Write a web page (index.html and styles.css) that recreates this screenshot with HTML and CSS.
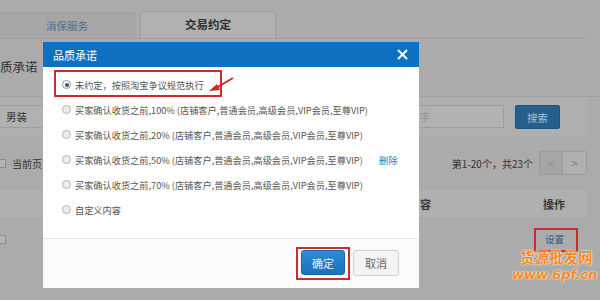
FILE: index.html
```html
<!DOCTYPE html>
<html lang="zh-CN">
<head>
<meta charset="utf-8">
<title>品质承诺</title>
<link rel="stylesheet" href="styles.css">
</head>
<body>
<div class="page">
  <div class="tabs">
    <div class="tab tab-off">消保服务</div>
    <div class="tab tab-on">交易约定</div>
  </div>
  <div class="heading">质承诺</div>
  <div class="filter">
    <div class="cat">男装</div>
    <div class="spacer"></div>
    <div class="kw">字</div>
    <div class="search">搜索</div>
  </div>
  <div class="pagerrow">
    <div class="selall"><span class="cb"></span><span>当前页</span></div>
    <div class="spacer"></div>
    <div class="count">第1-20个，共23个</div>
    <div class="pager"><span class="pbtn prev">&lt;</span><span class="pbtn">&gt;</span></div>
  </div>
  <div class="thead">
    <div class="spacer"></div>
    <div class="th-content">容</div>
    <div class="th-op">操作</div>
  </div>
  <div class="trow">
    <span class="cb"></span>
    <div class="spacer"></div>
    <a class="setlink">设置</a>
  </div>
</div>

<div class="mark mark-set"></div>
<div class="watermark">
  <div class="wm1">货源批发网</div>
  <div class="wm2">www.6pf.cn</div>
</div>

<div class="dialog">
  <div class="dhead">
    <span class="dtitle">品质承诺</span>
    <svg class="close" width="11" height="11" viewBox="0 0 11 11"><path d="M1 1L10 10M10 1L1 10" stroke="#fff" stroke-width="2"/></svg>
  </div>
  <div class="dbody">
    <label class="opt"><span class="radio on"></span>未约定，按照淘宝争议规范执行</label>
    <label class="opt"><span class="radio"></span>买家确认收货之前,100% (店铺客户,普通会员,高级会员,VIP会员,至尊VIP)</label>
    <label class="opt"><span class="radio"></span>买家确认收货之前,20% (店铺客户,普通会员,高级会员,VIP会员,至尊VIP)</label>
    <label class="opt"><span class="radio"></span>买家确认收货之前,50% (店铺客户,普通会员,高级会员,VIP会员,至尊VIP)<a class="del">删除</a></label>
    <label class="opt"><span class="radio"></span>买家确认收货之前,70% (店铺客户,普通会员,高级会员,VIP会员,至尊VIP)</label>
    <label class="opt"><span class="radio"></span>自定义内容</label>
  </div>
  <div class="dfoot">
    <button class="btn ok">确定</button>
    <button class="btn cancel">取消</button>
  </div>
  <div class="mark mark-opt"></div>
  <div class="mark mark-btn"></div>
  <svg class="arrow" width="30" height="20" viewBox="0 0 30 20"><path d="M27 2L10 12" stroke="#d4262b" stroke-width="2"/><path d="M3 15L11 8L14 14Z" fill="#d4262b"/></svg>
</div>
</body>
</html>
```

FILE: styles.css
```css
* { box-sizing: border-box; margin: 0; padding: 0; }
html, body { width: 600px; height: 300px; overflow: hidden; }
body {
  background: #ababab;
  font-family: "Noto Sans CJK SC", "Noto Sans", sans-serif;
  color: #3a3a3a;
  position: relative;
}
.page { width: 600px; }
.spacer { flex: 1; }

.tabs {
  display: flex;
  align-items: flex-end;
  gap: 5px;
  height: 39px;
  padding-top: 13px;
  width: 587px;
  border-bottom: 1px solid #9c9cab;
}
.tab {
  height: 26px;
  line-height: 25px;
  text-align: center;
  border: 1px solid #9d9d9d;
  border-bottom: none;
  border-radius: 2px 2px 0 0;
  font-size: 10.5px;
}
.tab-off { width: 135px; background: #a6a6a6; color: #4c6f8c; border-left: none; }
.tab-on { width: 136px; background: #b1b1b1; color: #2e2e2e; font-size: 11.5px; font-weight: bold; height: 27px; }

.heading {
  height: 58px;
  padding-top: 18px;
  font-size: 12.5px;
  line-height: 20px;
  color: #333;
  border-bottom: 1px solid #a0a0a0;
}

.filter {
  display: flex;
  align-items: center;
  height: 39px;
  width: 587px;
  background: #afafaf;
  padding-right: 27px;
}
.cat {
  width: 60px;
  height: 23px;
  line-height: 22px;
  padding-left: 6px;
  font-size: 10.5px;
  color: #333;
  border-top: 1px solid #9e9e9e;
  border-bottom: 1px solid #9e9e9e;
  background: #b1b1b1;
}
.kw {
  width: 89px;
  height: 23px;
  line-height: 21px;
  padding-left: 4px;
  font-size: 10px;
  color: #8e8e8e;
  border: 1px solid #9c9c9c;
  background: #b2b2b2;
  margin-right: 11px;
}
.search {
  width: 45px;
  height: 24px;
  line-height: 24px;
  text-align: center;
  font-size: 10.5px;
  color: #a9c0d4;
  background: #245f8e;
  border: 1px solid #1f5480;
  border-radius: 2px;
}

.pagerrow {
  display: flex;
  align-items: center;
  height: 52px;
  width: 587px;
  padding-top: 2px;
}
.selall { display: flex; align-items: center; gap: 6px; font-size: 10px; color: #333; margin-left: -3px; }
.cb {
  display: inline-block;
  width: 9px;
  height: 9px;
  border: 1px solid #8c8c8c;
  background: #b4b4b4;
}
.count { font-size: 10px; color: #333; margin-right: 6px; }
.pager { display: flex; border: 1px solid #9a9a9a; border-radius: 2px; height: 24px; }
.pbtn {
  width: 23px;
  text-align: center;
  line-height: 22px;
  font-size: 11px;
  color: #777;
  background: #b0b0b0;
}
.pbtn.prev { background: #a5a5a5; border-right: 1px solid #9a9a9a; color: #8a8a8a; }

.thead {
  display: flex;
  align-items: center;
  height: 29px;
  width: 587px;
  margin-top: 2px;
  background: #b0b0b0;
  border-bottom: 1px solid #a2a2a2;
  font-size: 11px;
  font-weight: bold;
  color: #3a3a3a;
}
.th-content { width: 123px; }
.th-op { width: 44px; }

.trow {
  display: flex;
  align-items: center;
  height: 40px;
  width: 587px;
  margin-left: -3px;
}
.setlink { font-size: 9.5px; color: #2d5e86; width: 39px; }

.mark { position: absolute; border: 2px solid #cf2a2d; }
.mark-set { left: 534px; top: 228px; width: 44px; height: 24px; }

.watermark {
  position: absolute;
  left: 512px;
  top: 248px;
  color: #f08a1e;
  font-weight: bold;
  text-shadow: 0 0 2px #fff, 0 0 1px #fff;
}
.wm1 { font-size: 14.5px; line-height: 18px; padding-left: 8px; font-family: "Noto Sans CJK SC", sans-serif; }
.wm2 { font-size: 13px; line-height: 18px; font-family: "DejaVu Sans", sans-serif; font-style: italic; }

.dialog {
  position: absolute;
  left: 43px;
  top: 42px;
  width: 376px;
  height: 246px;
  background: #fff;
  display: flex;
  flex-direction: column;
}
.dhead {
  height: 25px;
  background: #0e70c0;
  display: flex;
  align-items: center;
  justify-content: space-between;
  padding: 0 11px 0 10px;
}
.dtitle { color: #fff; font-size: 11px; }
.dbody { padding-top: 5px; height: 171px; }
.opt {
  display: flex;
  align-items: center;
  height: 25px;
  padding-left: 19px;
  font-size: 9.2px;
  color: #555;
  white-space: nowrap;
}
.radio {
  width: 9px;
  height: 9px;
  border-radius: 50%;
  border: 1px solid #b5b5b5;
  background: #ececec;
  margin-right: 4px;
  position: relative;
  flex: none;
}
.radio.on { border-color: #8a96a6; background: #fff; }
.radio.on::after {
  content: "";
  position: absolute;
  left: 1.5px; top: 1.5px;
  width: 4px; height: 4px;
  border-radius: 50%;
  background: #3e4f67;
}
.del { color: #2b7fbf; margin-left: 16px; font-size: 9.5px; }
.dfoot {
  flex: 1;
  border-top: 1px solid #e6e6e6;
  background: #fbfbfb;
  display: flex;
  justify-content: flex-end;
  align-items: flex-start;
  gap: 8px;
  padding: 11px 20px 0 0;
}
.btn {
  height: 25px;
  font-family: inherit;
  font-size: 11px;
  border-radius: 3px;
}
.ok { width: 44px; background: linear-gradient(#2f8bd2, #1a73bc); border: 1px solid #1768a8; color: #e8f1f9; }
.cancel { width: 46px; height: 26px; background: #f4f4f4; border: 1px solid #d0d0d0; color: #666; }
.mark-opt { left: 11px; top: 28px; width: 168px; height: 27px; }
.mark-btn { left: 253px; top: 205px; width: 54px; height: 33px; }
.arrow { position: absolute; left: 163px; top: 34px; }
```
